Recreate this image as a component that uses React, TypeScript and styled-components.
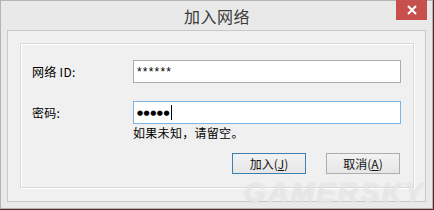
import styled, { createGlobalStyle } from "styled-components";

const GlobalStyle = createGlobalStyle`
  html, body {
    margin: 0;
    padding: 0;
    background: #5a2626;
  }
  body {
    font-family: "Noto Sans CJK SC", "Liberation Sans", sans-serif;
    font-size: 12px;
    color: #000;
  }
`;

const Window = styled.div`
  position: relative;
  box-sizing: border-box;
  width: 433px;
  height: 209px;
  border: 1px solid #b4b4b4;
  background: #e9e9e9;
  padding: 0 6px 6px 6px;
  display: flex;
  flex-direction: column;
`;

const TitleBar = styled.div`
  height: 29px;
  display: grid;
  grid-template-columns: 1fr auto 1fr;
  align-items: start;
  margin-right: -1px;
`;

const Title = styled.div`
  grid-column: 2;
  font-size: 16px;
  line-height: 30px;
  color: #3a3a3a;
  letter-spacing: 0.5px;
`;

const CloseButton = styled.div`
  grid-column: 3;
  justify-self: end;
  width: 31px;
  height: 20px;
  margin-top: -1px;
  background: #c7504d;
  display: flex;
  align-items: center;
  justify-content: center;
`;

const Client = styled.div`
  flex: 1;
  box-sizing: border-box;
  border: 1px solid #c9c9c9;
  background: #f0f0f0;
  padding: 12px 11px 13px 12px;
  display: flex;
`;

const GroupBox = styled.div`
  flex: 1;
  box-sizing: border-box;
  border: 1px solid #d8d8d8;
  box-shadow: inset 1px 1px 0 #fff, 1px 1px 0 #fff;
  padding: 16px 12px 0 11px;
  display: grid;
  grid-template-columns: 101px 268px;
  grid-auto-rows: min-content;
  align-content: start;
`;

const Label = styled.div<{ $gap?: number }>`
  display: flex;
  align-items: center;
  height: 23px;
  margin-top: ${({ $gap }) => $gap ?? 0}px;
  font-size: 12px;
  letter-spacing: 0.3px;
`;

const Field = styled.div<{ $focused?: boolean; $gap?: number }>`
  box-sizing: border-box;
  height: 23px;
  margin-top: ${({ $gap }) => $gap ?? 0}px;
  border: 1px solid ${({ $focused }) => ($focused ? "#7fb4e6" : "#acacac")};
  background: #fff;
  padding: 0 3px;
  display: flex;
  align-items: center;
  &::after {
    content: "";
    display: ${({ $focused }) => ($focused ? "block" : "none")};
    width: 1px;
    height: 15px;
    margin-left: 1px;
    background: #000;
  }
`;

const Stars = styled.span`
  font-family: "Liberation Sans", sans-serif;
  font-size: 12px;
  letter-spacing: 1.2px;
  margin-top: 1px;
`;

const Dots = styled.span`
  font-family: "DejaVu Sans", sans-serif;
  font-size: 7px;
  letter-spacing: 0.5px;
`;

const Hint = styled.div`
  grid-column: 2;
  font-size: 12px;
  line-height: 15px;
  letter-spacing: 0.3px;
  margin-top: 1px;
`;

const ButtonRow = styled.div`
  grid-column: 1 / span 2;
  display: flex;
  justify-content: flex-end;
  gap: 20px;
  margin-top: 13px;
  padding-right: 1px;
`;

const Button = styled.div<{ $default?: boolean }>`
  box-sizing: border-box;
  width: 74px;
  height: 21px;
  border: 1px solid ${({ $default }) => ($default ? "#3c7fb1" : "#adadad")};
  background: linear-gradient(#f2f2f2, #e6e6e6);
  display: flex;
  align-items: center;
  justify-content: center;
  font-size: 12px;
  color: #111;
  u {
    text-decoration: underline;
  }
`;

const Watermark = styled.div`
  position: absolute;
  left: 243px;
  top: 176px;
  font-family: "Liberation Sans", sans-serif;
  font-weight: bold;
  font-style: italic;
  font-size: 28px;
  letter-spacing: 2.5px;
  color: rgba(255, 255, 255, 0.6);
  text-shadow: 0 0 1px rgba(160, 160, 160, 0.55);
  pointer-events: none;
`;

const CloseIcon = () => (
  <svg width="10" height="10" viewBox="0 0 10 10">
    <path d="M1 1 L9 9 M9 1 L1 9" stroke="#fff" strokeWidth="2" />
  </svg>
);

export default function App() {
  return (
    <>
      <GlobalStyle />
      <Window>
        <TitleBar>
          <Title>加入网络</Title>
          <CloseButton>
            <CloseIcon />
          </CloseButton>
        </TitleBar>
        <Client>
          <GroupBox>
            <Label>网络 ID:</Label>
            <Field>
              <Stars>******</Stars>
            </Field>
            <Label $gap={18}>密码:</Label>
            <Field $focused $gap={18}>
              <Dots>●●●●●</Dots>
            </Field>
            <Hint>如果未知，请留空。</Hint>
            <ButtonRow>
              <Button $default>
                加入(<u>J</u>)
              </Button>
              <Button>
                取消(<u>A</u>)
              </Button>
            </ButtonRow>
          </GroupBox>
        </Client>
        <Watermark>GAMERSKY</Watermark>
      </Window>
    </>
  );
}
